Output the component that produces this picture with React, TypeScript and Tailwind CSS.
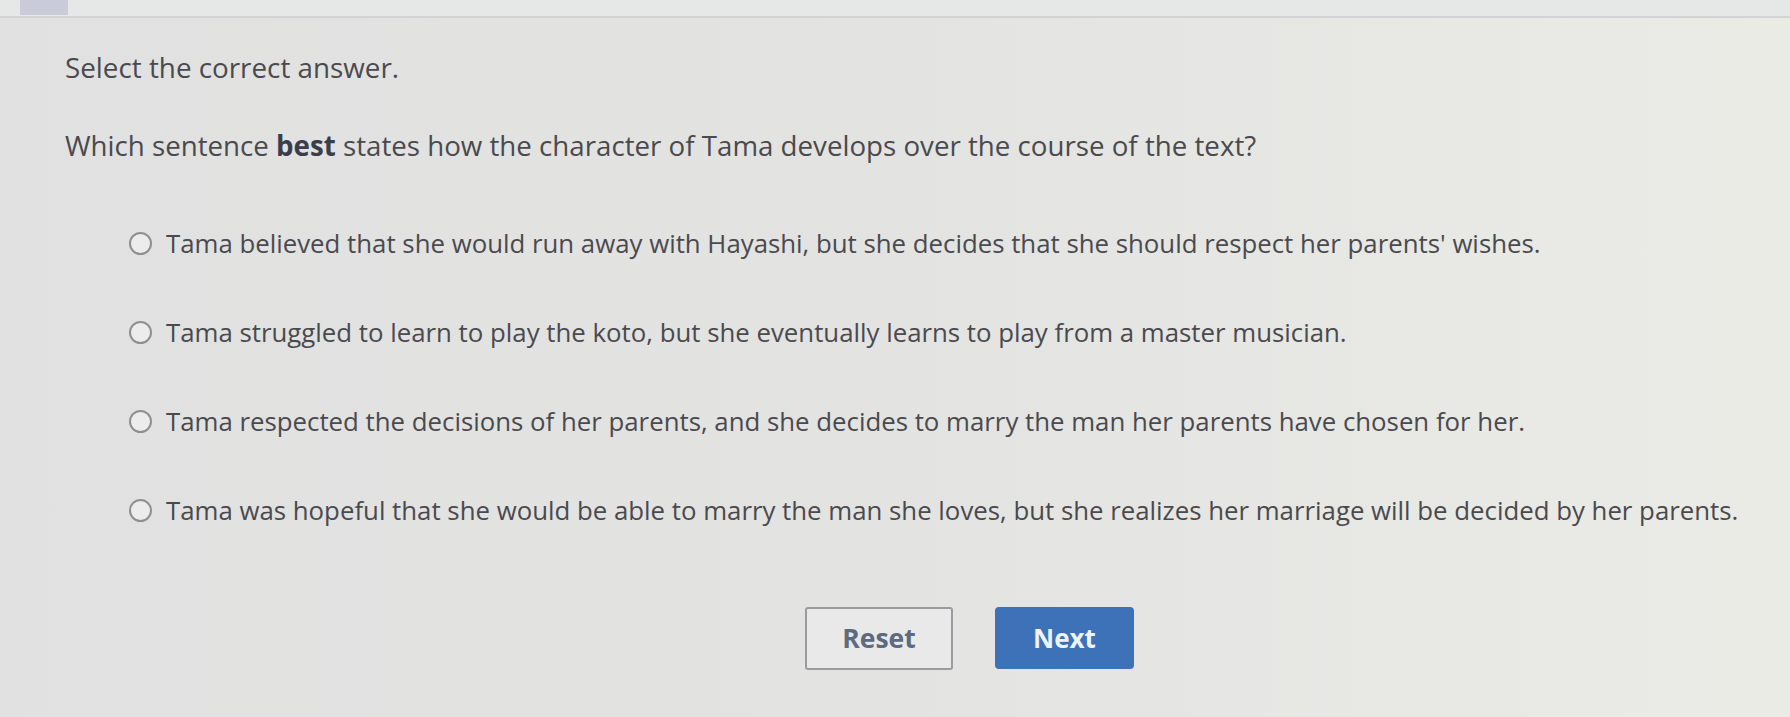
import React from 'react'

const options = [
  "Tama believed that she would run away with Hayashi, but she decides that she should respect her parents' wishes.",
  'Tama struggled to learn to play the koto, but she eventually learns to play from a master musician.',
  'Tama respected the decisions of her parents, and she decides to marry the man her parents have chosen for her.',
  'Tama was hopeful that she would be able to marry the man she loves, but she realizes her marriage will be decided by her parents.',
]

export default function App() {
  return (
    <div
      className="w-[1790px] h-[717px] overflow-hidden bg-gradient-to-r from-[#e1e1e1] via-[#e3e3e2] to-[#ebebe6] text-[#4a4a4e]"
      style={{ fontFamily: '"Open Sans", "Noto Sans", sans-serif' }}
    >
      <div className="h-[18px] border-b-2 border-[#d2d3d3] bg-[#e6e7e7] flex">
        <div className="ml-[20px] w-[48px] h-[15px] bg-[#c9ccd8]" />
      </div>

      <div className="pl-[65px]">
        <p className="mt-[34px] text-[27.8px] leading-[30px]">Select the correct answer.</p>
        <p className="mt-[48px] text-[27.7px] leading-[30px]">
          Which sentence <span className="font-bold text-[#3a3d4b]">best</span> states how the character of Tama develops
          over the course of the text?
        </p>

        <div className="mt-[68px] pl-[64px] flex flex-col gap-[59px]">
          {options.map((o) => (
            <label key={o} className="flex items-center gap-[14px] h-[30px]">
              <span className="w-[23px] h-[23px] rounded-full border-2 border-[#8e8f91] bg-[#ececec] shrink-0" />
              <span className="text-[25.8px] leading-[30px] whitespace-nowrap">{o}</span>
            </label>
          ))}
        </div>
      </div>

      <div className="mt-[82px] pl-[805px] flex gap-[42px]">
        <button className="w-[148px] h-[63px] border-2 border-[#9a9b9d] rounded-[3px] bg-[#e9e9e9] text-[26.5px] font-bold text-[#5d6a7f]">
          Reset
        </button>
        <button className="w-[139px] h-[62px] rounded-[4px] bg-[#3d72b9] text-[26px] font-bold text-[#eef4fb]">
          Next
        </button>
      </div>
    </div>
  )
}
